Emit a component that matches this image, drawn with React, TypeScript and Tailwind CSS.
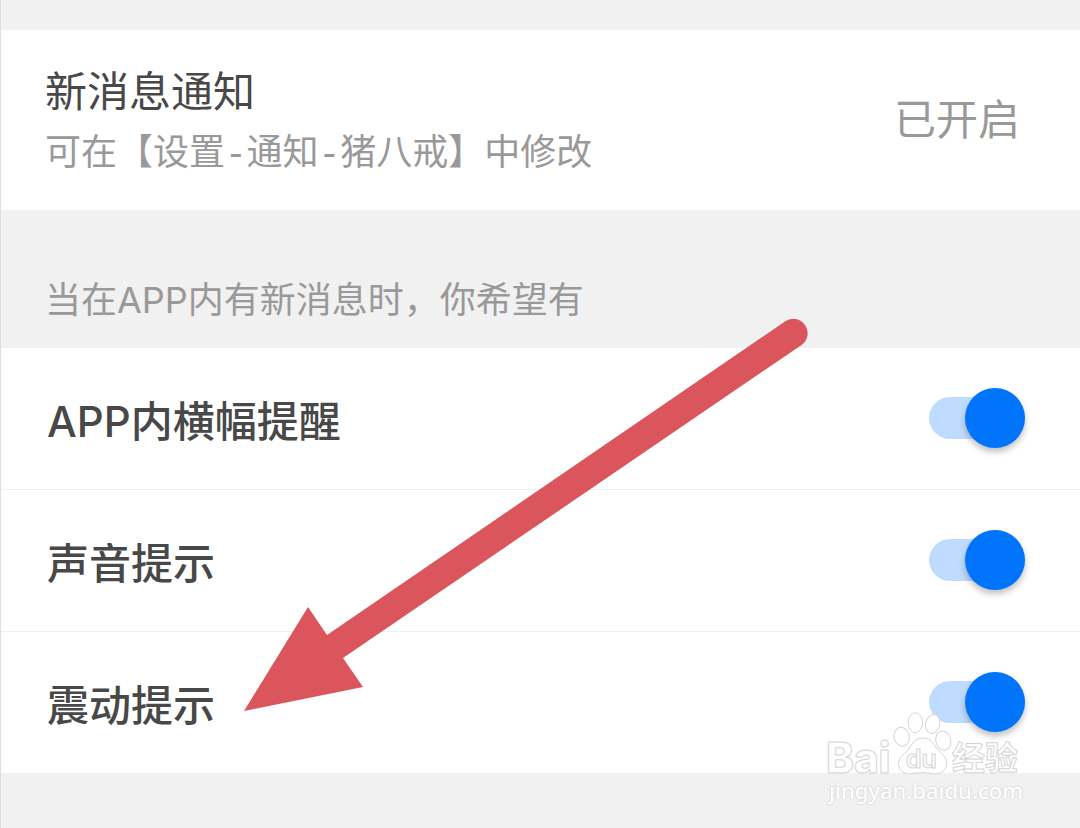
import { useState } from "react";

const initialOptions = [
  { id: "banner", label: "APP内横幅提醒", enabled: true },
  { id: "sound", label: "声音提示", enabled: true },
  { id: "vibrate", label: "震动提示", enabled: true },
];

type SwitchProps = {
  id: string;
  checked: boolean;
  onChange: () => void;
};

function Switch({ id, checked, onChange }: SwitchProps) {
  return (
    <input
      id={id}
      type="checkbox"
      role="switch"
      checked={checked}
      onChange={onChange}
      className="flex h-[42px] w-24 shrink-0 cursor-pointer appearance-none items-center rounded-full bg-gray-200 before:size-[60px] before:shrink-0 before:rounded-full before:bg-gray-50 before:shadow-[0_4px_6px_rgba(0,0,0,0.25)] before:content-[''] checked:justify-end checked:bg-[#bfdbff] checked:before:bg-[#0074fa]"
    />
  );
}

function Arrow() {
  return (
    <svg
      className="pointer-events-none absolute top-[318px] left-[243px]"
      width="564"
      height="394"
      viewBox="244 318 564 394"
      aria-hidden="true"
    >
      <path
        d="M244 711 L308 607 L327 635 L785 321.5 A14.3 14.3 0 0 1 801.5 345 L343 658 L363 687 Z"
        fill="#db565c"
      />
    </svg>
  );
}

function Watermark() {
  return (
    <div className="pointer-events-none absolute top-[710px] right-[54px] w-[200px]">
      <svg
        className="block overflow-visible"
        width="200"
        height="66"
        viewBox="0 0 200 66"
        fill="#fff"
        stroke="#d4d4d4"
        strokeWidth="1"
        strokeLinejoin="round"
        fontWeight="700"
      >
        <text x="0" y="63" fontSize="42" fontFamily="Inter, sans-serif" fontWeight="800">
          Bai
        </text>
        <ellipse cx="75.7" cy="26.7" rx="7.6" ry="9.6" transform="rotate(-12 75.7 26.7)" />
        <ellipse cx="89.3" cy="12.7" rx="7.2" ry="10" />
        <ellipse cx="106.7" cy="14" rx="7.2" ry="9.6" transform="rotate(12 106.7 14)" />
        <ellipse cx="117.3" cy="30.7" rx="7.4" ry="9.8" transform="rotate(-14 117.3 30.7)" />
        <path d="M97 28 C105 28 108 34 111 39 C115 43 121 47 120.7 54 C120 62 113 65 106 63.5 C100 62.5 93 62.5 87 63.5 C79 65.5 73 61 72.5 54 C72 48 78 44 82 40 C86 35 88 28 97 28 Z" />
        <text x="80" y="58" fontSize="25" fontFamily="Inter, sans-serif" fontWeight="600">
          du
        </text>
        <text x="126" y="60" fontSize="33" fontFamily="'Noto Sans CJK SC', sans-serif">
          经验
        </text>
      </svg>
      <p className="text-center font-['Noto_Sans',sans-serif] text-[22px] leading-7 font-medium whitespace-nowrap text-white [text-shadow:0_0_2px_#bbb]">
        jingyan.baidu.com
      </p>
    </div>
  );
}

export default function App() {
  const [options, setOptions] = useState(initialOptions);

  const toggle = (id: string) => {
    setOptions((prev) =>
      prev.map((item) =>
        item.id === id ? { ...item, enabled: !item.enabled } : item
      )
    );
  };

  return (
    <main className="relative min-h-screen overflow-hidden border-l border-[#dedede] bg-[#f1f1f1] pt-[30px] font-['Inter','Noto_Sans_CJK_SC',sans-serif] text-[#484848]">
      <section className="flex items-center justify-between bg-white pr-[60px] pl-11">
        <div className="pt-8 pb-6">
          <h1 className="text-[42px] leading-[60px]">新消息通知</h1>
          <p className="mt-1 font-['Liberation_Mono','Noto_Sans_CJK_SC',sans-serif] text-[36px] leading-[60px] text-[#999]">
            可在【设置-通知-猪八戒】中修改
          </p>
        </div>
        <span className="text-[42px] leading-[60px] text-[#999]">已开启</span>
      </section>

      <h2 className="px-11 pt-[60px] pb-[18px] text-[36px] leading-[60px] text-[#999]">
        当在APP内有新消息时，你希望有
      </h2>

      <ul className="bg-white">
        {options.map((item) => (
          <li
            key={item.id}
            className="flex items-center justify-between border-b border-[#f0f0f0] pt-9 pr-[55px] pb-[37px] pl-[46px]"
          >
            <label
              htmlFor={item.id}
              className="pt-2 text-[42px] leading-[60px] font-medium"
            >
              {item.label}
            </label>
            <Switch
              id={item.id}
              checked={item.enabled}
              onChange={() => toggle(item.id)}
            />
          </li>
        ))}
      </ul>

      <Arrow />
      <Watermark />
    </main>
  );
}
